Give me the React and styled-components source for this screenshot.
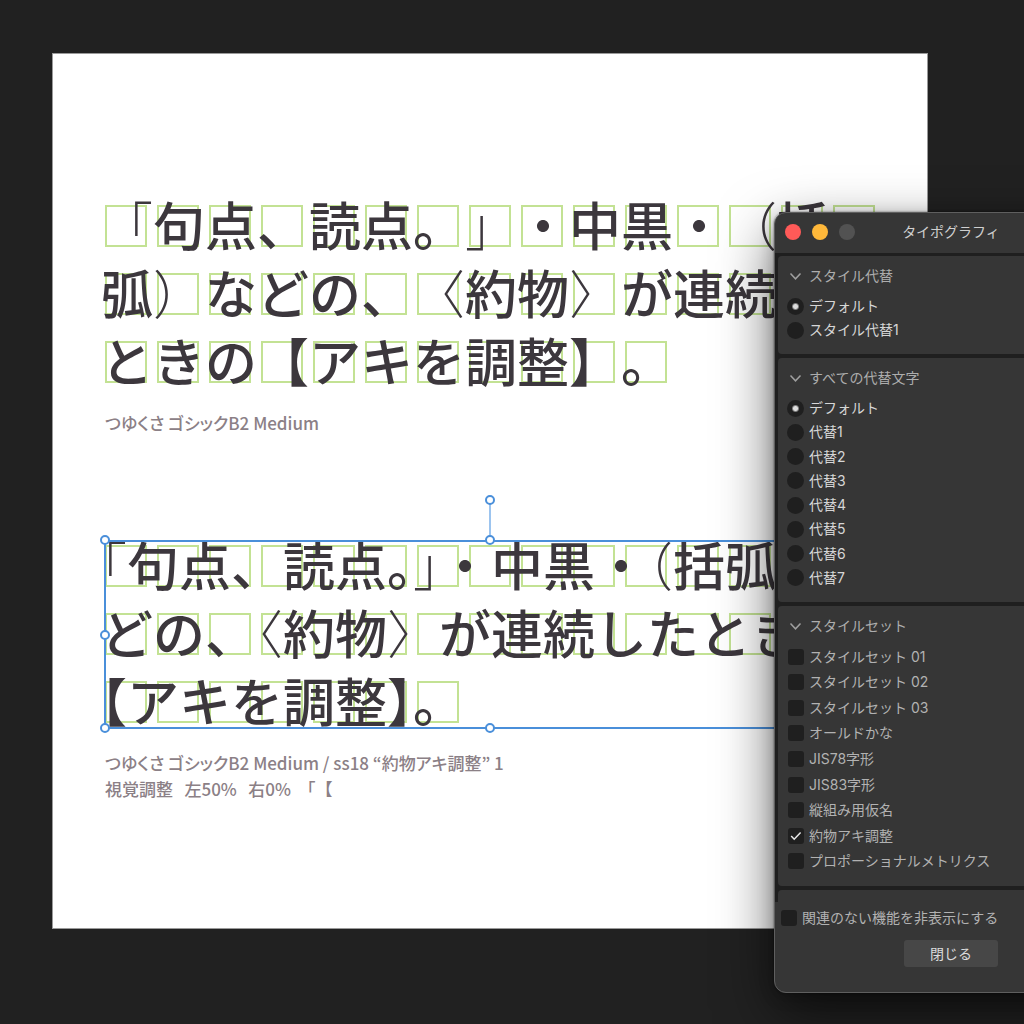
import { useState } from 'react'
import styled, { createGlobalStyle, css } from 'styled-components'

const GlobalStyle = createGlobalStyle`
  * {
    box-sizing: border-box;
  }

  body {
    margin: 0;
    background: #212121;
  }
`

const Desktop = styled.main`
  position: relative;
  min-height: 100vh;
  padding: 53px 96px 94px 52px;
  overflow: hidden;
  background: #212121;
  font-family: 'Noto Sans CJK JP', sans-serif;
`

const Artboard = styled.article`
  padding: 138px 51px 126px;
  border: 1px solid #9a9a9a;
  background: #fff;
`

/* guides and type share one grid cell, so the squares sit behind the glyphs */
const Sample = styled.section`
  position: relative;
  display: grid;
`

const Guides = styled.div`
  grid-area: 1 / 1;
  padding-left: 1px;
`

const GuideRow = styled.div`
  display: flex;
  align-items: center;
  gap: 10px;
  height: 68px;
`

const Guide = styled.i`
  flex: none;
  width: 42px;
  height: 42px;
  border: 2px solid #c3e294;
`

const Lines = styled.div`
  grid-area: 1 / 1;
  margin: 2px 0 -2px -3px;
  color: #3c373d;
  font-family: 'Liberation Sans', 'Noto Sans CJK JP', sans-serif;
  font-size: 52px;
  font-weight: 500;
  line-height: 68px;
  white-space: nowrap;
  text-spacing-trim: space-all;
`

const Line = styled.p`
  margin: 0;
`

const Mark = styled.span`
  font-weight: ${({ $thin }) => ($thin ? 300 : 500)};
  font-feature-settings: ${({ $half }) => ($half ? "'halt'" : 'normal')};
`

const Caption = styled.p`
  margin: 14px 0 0 1px;
  color: #8b8086;
  font-size: 17px;
  font-weight: 500;
  line-height: 26px;
  white-space: pre;
  font-feature-settings: 'palt';

  & + & {
    margin-top: 0;
  }
`

const FullWidth = styled.span`
  font-feature-settings: normal;
  text-spacing-trim: space-all;
`

const Group = styled.div`
  & + & {
    margin-top: 96px;
  }
`

const Selection = styled.div`
  position: absolute;
  inset: 8px 0 7px;
  border: 2px solid #4a8fda;
`

const handlePlace = {
  nw: css`
    top: -7px;
    left: -6px;
  `,
  n: css`
    top: -7px;
    left: calc(50% - 5px);
  `,
  w: css`
    top: calc(50% - 5px);
    left: -6px;
  `,
  sw: css`
    bottom: -6px;
    left: -6px;
  `,
  s: css`
    bottom: -6px;
    left: calc(50% - 5px);
  `,
  rotate: css`
    top: -47px;
    left: calc(50% - 5px);
  `,
}

const Handle = styled.span`
  position: absolute;
  width: 10px;
  height: 10px;
  border: 2px solid #4a8fda;
  border-radius: 50%;
  background: #fff;
  ${({ $at }) => handlePlace[$at]}
`

const Stem = styled.span`
  position: absolute;
  top: -38px;
  left: calc(50% - 1px);
  width: 2px;
  height: 34px;
  background: #9cc4ef;
`

const Panel = styled.aside`
  position: absolute;
  top: 212px;
  left: 774px;
  width: 354px;
  border: 1px solid #5f5f5f;
  border-radius: 12px;
  overflow: hidden;
  background: #363636;
  color: #d6d6d6;
  font-family: Inter, 'Noto Sans CJK JP', sans-serif;
  font-size: 14px;
  line-height: 20px;
`

const PanelShadow = styled.div`
  position: absolute;
  top: 212px;
  left: 774px;
  width: 354px;
  height: 781px;
  border-radius: 12px;
  box-shadow:
    0 0 2px rgba(0, 0, 0, 0.6),
    0 4px 16px rgba(0, 0, 0, 0.2),
    0 20px 56px rgba(0, 0, 0, 0.6);
`

const TitleBar = styled.header`
  display: grid;
  grid-template-columns: 1fr auto 1fr;
  align-items: center;
  height: 40px;
  padding: 0 10px 3px;

  h1 {
    margin: 0;
    color: #cfcfcf;
    font-size: 14px;
    font-weight: 400;
  }
`

const Lights = styled.div`
  display: flex;
  gap: 11px;
`

const Light = styled.button`
  width: 16px;
  height: 16px;
  padding: 0;
  border: 0;
  border-radius: 50%;
  background: ${({ $color }) => $color};
`

const Body = styled.div`
  display: grid;
  gap: 4px;
  padding: 3px 0 0 3px;
  background: #1f1f1f;
`

const Section = styled.fieldset`
  min-width: 0;
  margin: 0;
  padding: 10px 9px 12px;
  border: 0;
  border-radius: 4px 0 0 4px;
  background: #363636;
`

const SectionToggle = styled.button`
  display: flex;
  align-items: center;
  gap: 5px;
  padding: 0;
  border: 0;
  background: none;
  color: #adadad;
  font: inherit;
`

const Options = styled.div`
  display: grid;
  grid-auto-rows: 1fr;
  height: ${({ $height }) => $height}px;
  margin-top: 8px;
`

const Option = styled.label`
  display: flex;
  align-items: center;
  gap: 5px;
  color: ${({ $dim }) => ($dim ? '#b2b2b2' : '#d6d6d6')};
`

const Radio = styled.input`
  appearance: none;
  width: 17px;
  height: 17px;
  margin: 0;
  border: 0;
  border-radius: 50%;
  background: #1f1f1f;

  &:checked {
    background: radial-gradient(circle, #dcdcdc 2px, #1f1f1f 4px);
  }
`

const CheckWrap = styled.span`
  display: grid;
  padding-left: 1px;

  > * {
    grid-area: 1 / 1;
    width: 16px;
    height: 16px;
  }
`

const CheckInput = styled.input`
  appearance: none;
  margin: 0;
  border-radius: 3px;
  background: #1f1f1f;

  &:not(:checked) + svg {
    visibility: hidden;
  }
`

const FooterCap = styled.div`
  height: 12px;
  border-radius: 4px 0 0 0;
  background: #363636;
`

const Footer = styled.footer`
  display: grid;
  gap: 12px;
  justify-items: center;
  padding: 6px 5px 25px;
`

const FooterOption = styled(Option)`
  justify-self: start;
`

const CloseButton = styled.button`
  width: 94px;
  height: 27px;
  padding: 0;
  border: 0;
  border-radius: 3px;
  background: #474747;
  color: #dcdcdc;
  font: inherit;
`

const Chevron = () => (
  <svg width="17" height="12" viewBox="0 0 17 12" fill="none" aria-hidden="true">
    <path d="M3.5 3.5 8.5 8.8l5-5.3" stroke="#a0a0a0" strokeWidth="1.5" />
  </svg>
)

const Check = ({ checked, onChange }) => (
  <CheckWrap>
    <CheckInput type="checkbox" checked={checked} onChange={onChange} />
    <svg viewBox="0 0 16 16" fill="none" pointerEvents="none" aria-hidden="true">
      <path d="m3.2 8 3 3.2 6.4-6.8" stroke="#e6e6e6" strokeWidth="1.5" />
    </svg>
  </CheckWrap>
)

const GuideGrid = ({ rows }) => (
  <Guides aria-hidden="true">
    {rows.map((count, row) => (
      <GuideRow key={row}>
        {Array.from({ length: count }, (_, i) => (
          <Guide key={i} />
        ))}
      </GuideRow>
    ))}
  </Guides>
)

const TypeLines = ({ lines }) => (
  <Lines>
    {lines.map((runs, row) => (
      <Line key={row}>
        {runs.map((run, i) =>
          typeof run === 'string' ? (
            run
          ) : (
            <Mark key={i} $thin={run.thin} $half={run.half}>
              {run.text}
            </Mark>
          )
        )}
      </Line>
    ))}
  </Lines>
)

// thin: light brackets, half: blank side of the glyph is trimmed
const thin = (text) => ({ text, thin: true })
const half = (text) => ({ text, half: true })
const thinHalf = (text) => ({ text, thin: true, half: true })

const before = [
  [thin('「'), '句点、読点。', thin('」'), '・中黒・', thin('（'), '括'],
  ['弧', thin('）'), 'などの、', thin('〈'), '約物', thin('〉'), 'が連続'],
  ['ときの【アキを調整】。'],
]

const after = [
  [
    thinHalf('「'),
    '句点、読点',
    half('。'),
    thinHalf('」'),
    '・中黒・',
    thinHalf('（'),
    '括弧',
  ],
  ['どの、', thinHalf('〈'), '約物', thin('〉'), 'が連続したとき'],
  [half('【'), 'アキを調整', half('】'), '。'],
]

const alternates = [
  'デフォルト',
  '代替1',
  '代替2',
  '代替3',
  '代替4',
  '代替5',
  '代替6',
  '代替7',
]

const styleSets = [
  'スタイルセット 01',
  'スタイルセット 02',
  'スタイルセット 03',
  'オールドかな',
  'JIS78字形',
  'JIS83字形',
  '縦組み用仮名',
  '約物アキ調整',
  'プロポーショナルメトリクス',
]

const RadioSection = ({ title, name, items, height }) => {
  const [value, setValue] = useState(items[0])

  return (
    <Section aria-label={title}>
      <SectionToggle type="button">
        <Chevron />
        {title}
      </SectionToggle>
      <Options $height={height}>
        {items.map((item) => (
          <Option key={item}>
            <Radio
              type="radio"
              name={name}
              checked={value === item}
              onChange={() => setValue(item)}
            />
            {item}
          </Option>
        ))}
      </Options>
    </Section>
  )
}

const App = () => {
  const [enabled, setEnabled] = useState(['約物アキ調整'])
  const [hideUnused, setHideUnused] = useState(false)

  const toggle = (item) =>
    setEnabled((list) =>
      list.includes(item) ? list.filter((i) => i !== item) : [...list, item]
    )

  return (
    <Desktop>
      <GlobalStyle />
      <Artboard>
        <Group>
          <Sample>
            <GuideGrid rows={[15, 15, 11]} />
            <TypeLines lines={before} />
          </Sample>
          <Caption>つゆくさ ゴシックB2 Medium</Caption>
        </Group>
        <Group>
          <Sample>
            <GuideGrid rows={[15, 15, 7]} />
            <TypeLines lines={after} />
            <Selection>
              <Stem />
              {Object.keys(handlePlace).map((at) => (
                <Handle key={at} $at={at} />
              ))}
            </Selection>
          </Sample>
          <Caption>つゆくさ ゴシックB2 Medium / ss18 “約物アキ調整” 1</Caption>
          <Caption>
            {'視覚調整   左50%   右0%  '}
            <FullWidth>「【</FullWidth>
          </Caption>
        </Group>
      </Artboard>

      <PanelShadow />
      <Panel>
        <TitleBar>
          <Lights>
            <Light type="button" aria-label="閉じる" $color="#ff5a58" />
            <Light type="button" aria-label="しまう" $color="#ffb83a" />
            <Light type="button" aria-label="拡大" $color="#525252" />
          </Lights>
          <h1>タイポグラフィ</h1>
        </TitleBar>
        <Body>
          <RadioSection
            title="スタイル代替"
            name="style"
            items={['デフォルト', 'スタイル代替1']}
            height={48}
          />
          <RadioSection
            title="すべての代替文字"
            name="alternate"
            items={alternates}
            height={194}
          />
          <Section aria-label="スタイルセット">
            <SectionToggle type="button">
              <Chevron />
              スタイルセット
            </SectionToggle>
            <Options $height={230}>
              {styleSets.map((item) => (
                <Option key={item} $dim>
                  <Check
                    checked={enabled.includes(item)}
                    onChange={() => toggle(item)}
                  />
                  {item}
                </Option>
              ))}
            </Options>
          </Section>
          <FooterCap />
        </Body>
        <Footer>
          <FooterOption $dim>
            <Check
              checked={hideUnused}
              onChange={() => setHideUnused(!hideUnused)}
            />
            関連のない機能を非表示にする
          </FooterOption>
          <CloseButton type="button">閉じる</CloseButton>
        </Footer>
      </Panel>
    </Desktop>
  )
}

export default App
